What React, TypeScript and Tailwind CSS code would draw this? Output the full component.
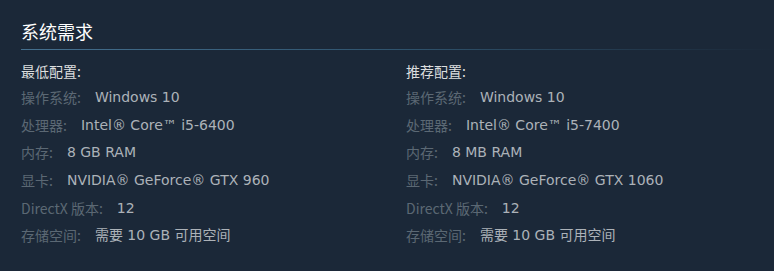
import React from "react";

type Row = { label: string; value: string };

const minRows: Row[] = [
  { label: "操作系统:", value: "Windows 10" },
  { label: "处理器:", value: "Intel® Core™ i5-6400" },
  { label: "内存:", value: "8 GB RAM" },
  { label: "显卡:", value: "NVIDIA® GeForce® GTX 960" },
  { label: "DirectX 版本:", value: "12" },
  { label: "存储空间:", value: "需要 10 GB 可用空间" },
];

const recRows: Row[] = [
  { label: "操作系统:", value: "Windows 10" },
  { label: "处理器:", value: "Intel® Core™ i5-7400" },
  { label: "内存:", value: "8 MB RAM" },
  { label: "显卡:", value: "NVIDIA® GeForce® GTX 1060" },
  { label: "DirectX 版本:", value: "12" },
  { label: "存储空间:", value: "需要 10 GB 可用空间" },
];

const cjk = { fontFamily: '"Noto Sans CJK SC", sans-serif' };

function Column({ title, rows }: { title: string; rows: Row[] }) {
  return (
    <div className="flex flex-col">
      <div className="text-[14px] leading-[24px] text-[#dcdedf] h-[24px] mb-[1px]" style={cjk}>{title}</div>
      {rows.map((r, i) => (
        <div key={i} className="flex items-center h-[27.6px] text-[14px]">
          <span className="text-[#5b6874]" style={cjk}>{r.label}</span>
          <span className="ml-[14px] text-[#acb2b8]">{r.value}</span>
        </div>
      ))}
    </div>
  );
}

export default function App() {
  return (
    <div
      className="w-[774px] h-[271px] bg-[#1b2838] pl-[21px] pt-[17px]"
      style={{ fontFamily: '"DejaVu Sans", "Noto Sans CJK SC", sans-serif' }}
    >
      <div className="text-[18px] leading-[28px] text-white" style={cjk}>系统需求</div>
      <div className="h-[1px] w-[753px] mt-[4px] bg-gradient-to-r from-[#45708f] via-[#2f536d] to-transparent" />
      <div className="grid grid-cols-[385px_1fr] mt-[9px]">
        <Column title="最低配置:" rows={minRows} />
        <Column title="推荐配置:" rows={recRows} />
      </div>
    </div>
  );
}
